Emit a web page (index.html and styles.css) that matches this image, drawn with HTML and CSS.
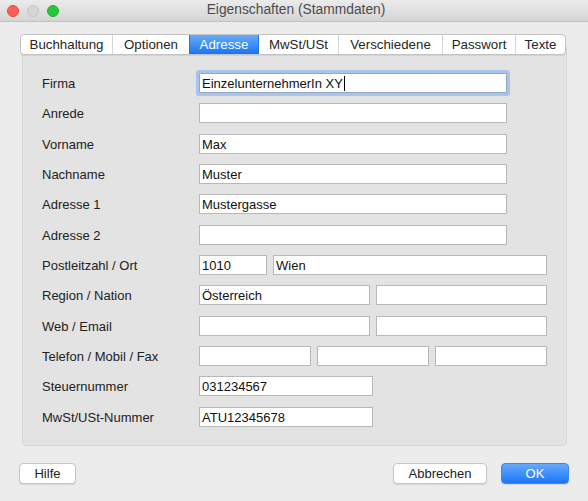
FILE: index.html
```html
<!DOCTYPE html>
<html>
<head>
<meta charset="utf-8">
<link rel="stylesheet" href="styles.css">
</head>
<body>
<div class="window">
  <div class="titlebar">
    <div class="lights">
      <span class="light red"></span>
      <span class="light gray"></span>
      <span class="light green"></span>
    </div>
    <div class="title">Eigenschaften (Stammdaten)</div>
  </div>
  <div class="content">
    <div class="tabs">
      <div class="tab t1">Buchhaltung</div>
      <div class="tab t2">Optionen</div>
      <div class="tab t3 active">Adresse</div>
      <div class="tab t4">MwSt/USt</div>
      <div class="tab t5">Verschiedene</div>
      <div class="tab t6">Passwort</div>
      <div class="tab t7">Texte</div>
    </div>
    <div class="panel">
      <div class="form">
        <div class="label">Firma</div>
        <div class="fields"><div class="input w-full focus">EinzelunternehmerIn XY<span class="caret"></span></div></div>
        <div class="label">Anrede</div>
        <div class="fields"><div class="input w-full"></div></div>
        <div class="label">Vorname</div>
        <div class="fields"><div class="input w-full">Max</div></div>
        <div class="label">Nachname</div>
        <div class="fields"><div class="input w-full">Muster</div></div>
        <div class="label">Adresse 1</div>
        <div class="fields"><div class="input w-full">Mustergasse</div></div>
        <div class="label">Adresse 2</div>
        <div class="fields"><div class="input w-full"></div></div>
        <div class="label">Postleitzahl / Ort</div>
        <div class="fields"><div class="input w-plz">1010</div><div class="input w-ort">Wien</div></div>
        <div class="label">Region / Nation</div>
        <div class="fields"><div class="input w-half">Österreich</div><div class="input w-half"></div></div>
        <div class="label">Web / Email</div>
        <div class="fields"><div class="input w-half"></div><div class="input w-half"></div></div>
        <div class="label">Telefon / Mobil / Fax</div>
        <div class="fields"><div class="input w-third"></div><div class="input w-third"></div><div class="input w-third"></div></div>
        <div class="label">Steuernummer</div>
        <div class="fields"><div class="input w-tax">031234567</div></div>
        <div class="label">MwSt/USt-Nummer</div>
        <div class="fields"><div class="input w-tax">ATU12345678</div></div>
      </div>
    </div>
    <div class="buttons">
      <div class="btn hilfe">Hilfe</div>
      <div class="spacer"></div>
      <div class="btn abbrechen">Abbrechen</div>
      <div class="btn ok">OK</div>
    </div>
  </div>
</div>
</body>
</html>
```
FILE: styles.css
```css
* { box-sizing: border-box; }
html, body { margin: 0; padding: 0; }
body {
  width: 588px;
  height: 501px;
  overflow: hidden;
  background: #ececec;
  font-family: "Liberation Sans", Arial, sans-serif;
  font-size: 13px;
  color: #222;
}
.window {
  width: 588px;
  height: 501px;
  display: flex;
  flex-direction: column;
  background: #ececec;
}
.titlebar {
  height: 22px;
  flex: 0 0 22px;
  background: linear-gradient(#ebebeb, #d5d5d5);
  border-bottom: 1px solid #c1c1c1;
  display: flex;
  align-items: center;
  position: relative;
}
.lights {
  display: flex;
  gap: 8px;
  padding-left: 7px;
}
.light {
  width: 12px;
  height: 12px;
  border-radius: 50%;
  display: block;
}
.light.red { background: #fc5f57; border: 0.5px solid #de4a41; }
.light.gray { background: #d6d6d6; border: 0.5px solid #c4c4c4; }
.light.green { background: #29c640; border: 0.5px solid #1fae33; }
.title {
  position: absolute;
  left: 0;
  right: 0;
  top: 2px;
  text-align: center;
  color: #4c4c4c;
  font-size: 13.8px;
  padding-left: 4px;
}
.content {
  flex: 1;
  display: flex;
  flex-direction: column;
  padding: 12px 21px 0 22px;
}
.tabs {
  display: flex;
  height: 21px;
  margin-left: -2px;
  width: 546px;
  background: #fff;
  border: 1px solid #c3c3c3;
  border-radius: 4px;
  box-shadow: 0 1px 1px rgba(0,0,0,0.08);
  overflow: hidden;
  position: relative;
  z-index: 1;
  font-size: 13.3px;
}
.tab {
  display: flex;
  align-items: center;
  justify-content: center;
  border-left: 1px solid #d6d6d6;
  color: #262626;
  line-height: 19px;
}
.tab.t1 { width: 91px; border-left: none; }
.tab.t2 { width: 77px; }
.tab.t3 { width: 69px; }
.tab.t4 { width: 80px; }
.tab.t5 { width: 104px; }
.tab.t6 { width: 73px; }
.tab.t7 { flex: 1; }
.tab.active {
  background: linear-gradient(#69abfa, #1a75f4);
  color: #fff;
  border-left-color: #1a75f4;
}
.tab.active + .tab { border-left-color: #1a75f4; }
.panel {
  margin-top: -11px;
  height: 402px;
  width: 545px;
  background: #e3e3e3;
  border: 1px solid #d6d6d6;
  border-radius: 4px;
  padding: 28px 0 0 19px;
}
.form {
  display: grid;
  grid-template-columns: 157px 348px;
  row-gap: 10.35px;
}
.label {
  height: 20px;
  display: flex;
  align-items: center;
  color: #222;
  padding-top: 1px;
}
.fields {
  display: flex;
  gap: 6px;
  height: 20px;
}
.input {
  height: 20px;
  background: #fff;
  border: 1px solid #b8b8b8;
  padding-left: 2px;
  line-height: 19px;
  color: #111;
  white-space: nowrap;
  overflow: hidden;
}
.input.focus {
  box-shadow: 0 0 0 3px #a8c4ec;
  border-color: #9aa7b7;
  border-radius: 1px;
  overflow: visible;
}
.caret {
  display: inline-block;
  width: 1px;
  height: 15px;
  background: #000;
  vertical-align: -3px;
  margin-left: 1px;
}
.w-full { width: 308px; }
.w-plz { width: 68px; }
.w-ort { width: 274px; }
.w-half { width: 171px; }
.w-third { width: 112px; }
.w-tax { width: 174px; }
.buttons {
  display: flex;
  align-items: center;
  margin-top: 17px;
  margin-left: -3px;
  margin-right: -2px;
}
.spacer { flex: 1; }
.btn {
  height: 21px;
  background: #fff;
  border: 1px solid #c6c6c6;
  border-radius: 4px;
  box-shadow: 0 1px 1px rgba(0,0,0,0.1);
  display: flex;
  align-items: center;
  justify-content: center;
  color: #222;
}
.btn.hilfe { width: 57px; }
.btn.abbrechen { width: 94px; margin-right: 14px; }
.btn.ok {
  width: 68px;
  background: linear-gradient(#66aafb, #1a76f6);
  border-color: #3b88f5;
  color: #fff;
}
```
